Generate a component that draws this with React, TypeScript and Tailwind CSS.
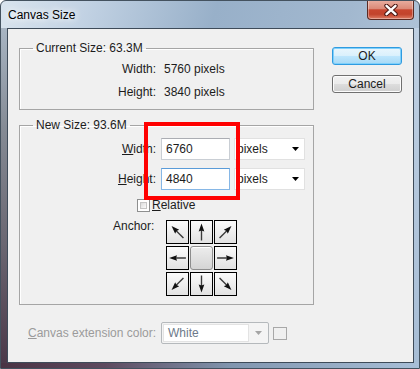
import type { ReactNode } from "react"

const Arrow = ({ deg }: { deg: number }) => (
    <svg width="21" height="22" viewBox="0 0 20 20">
        <g transform={`rotate(${deg} 10 10)`}>
            <line x1="10" y1="18" x2="10" y2="7.5" stroke="#3a3a3a" strokeWidth="1.3" />
            <path d="M10 2 L12.7 9.6 L10 8.6 L7.3 9.6 Z" fill="#111" />
        </g>
    </svg>
)

const Cell = ({ deg }: { deg: number }) => (
    <div className="flex items-center justify-center border border-black bg-[linear-gradient(#fbfbfb,#e2e2e2)]">
        <Arrow deg={deg} />
    </div>
)

const Row = ({ label, children }: { label: ReactNode; children: ReactNode }) => (
    <div className="flex items-center h-[15px]">
        <span className="w-[123px] text-right">{label}</span>
        <span className="ml-[8px]">{children}</span>
    </div>
)

const Pixels = () => (
    <div className="ml-[4px] w-[71px] h-[22px] bg-white border border-[#e1e1e1] flex items-center justify-between pl-[2px] pr-[5px]">
        <span>pixels</span>
        <svg width="7" height="4" viewBox="0 0 7 4"><path d="M0 0 H7 L3.5 4 Z" fill="#000" /></svg>
    </div>
)

export default function App() {
    return <div className="relative w-[420px] h-[369px] flex flex-col overflow-hidden rounded-t-[6px] border border-[#44525f] bg-[linear-gradient(105deg,#d9e4ee_0%,#c3d3e4_16%,#98b0c9_42%,#a2b8cf_68%,#bccee0_100%)] [font-family:'Liberation_Sans',Arial,sans-serif] text-[12px] leading-[15px] text-[#1c1c1c]">
        {/* title bar */}
        <div className="h-[27px] flex items-start justify-between">
            <span className="pl-[7px] pt-[7px] text-black [text-shadow:0_0_6px_#fff,0_0_10px_#fff]">Canvas Size</span>
            <div className="-mt-px mr-[5px] w-[47px] h-[20px] flex items-center justify-center rounded-b-[4px] border border-t-0 border-[#5b2a22] bg-[linear-gradient(#eab0a2_0%,#dc8a78_45%,#c8462f_52%,#c2432c_75%,#de7c64_100%)] shadow-[inset_0_0_0_1px_rgba(255,255,255,0.35)]">
                <svg width="14" height="12" viewBox="0 0 14 12">
                    <path d="M2.5 1.8 L11.5 10.2 M11.5 1.8 L2.5 10.2" stroke="#4a1712" strokeWidth="4.4" strokeLinecap="round" />
                    <path d="M2.5 1.8 L11.5 10.2 M11.5 1.8 L2.5 10.2" stroke="#fff" strokeWidth="2.4" strokeLinecap="round" />
                </svg>
            </div>
        </div>

        <div className="flex flex-1">
            <div className="w-[6px] bg-[linear-gradient(180deg,#a8b5c3_0%,#858b95_30%,#6a6671_65%,#4b3849_100%)]" />

            {/* client area */}
            <div className="flex-1 flex border border-[#3e4b59] bg-[#f0f0f0]">
                <div className="w-[306px] shrink-0 pl-[11px] pt-[12px] flex flex-col">
                    <fieldset className="w-[295px] border border-[#a5a5a5] pl-[13px] pr-[8px] pt-[6px] pb-[9px] shadow-[inset_1px_1px_0_#fff]">
                        <legend className="px-[3px]">Current Size: 63.3M</legend>
                        <div className="flex flex-col gap-[8px]">
                            <Row label="Width:">5760 pixels</Row>
                            <Row label="Height:">3840 pixels</Row>
                        </div>
                    </fieldset>

                    <fieldset className="mt-[8px] w-[295px] border border-[#a5a5a5] pl-[13px] pr-[8px] pt-[5px] pb-[8px] shadow-[inset_1px_1px_0_#fff]">
                        <legend className="px-[3px]">New Size: 93.6M</legend>
                        <div className="flex items-center h-[22px]">
                            <span className="w-[123px] text-right"><u>W</u>idth:</span>
                            <div className="ml-[5px] w-[69px] h-[22px] bg-white border border-[#c9ced4] border-t-[#abadb3] pl-[4px] flex items-center">6760</div>
                            <Pixels />
                        </div>
                        <div className="mt-[8px] flex items-center h-[22px]">
                            <span className="w-[123px] text-right"><u>H</u>eight:</span>
                            <div className="ml-[5px] w-[69px] h-[22px] bg-white border border-[#86b7e6] border-t-[#5a9bd8] pl-[4px] flex items-center">4840</div>
                            <Pixels />
                        </div>
                        <div className="mt-[8px] h-[15px] flex items-center pl-[104px]">
                            <div className="w-[13px] h-[13px] border border-[#8e8f8f] bg-white p-[2px]">
                                <div className="w-full h-full border border-[#c5c5c5] bg-[linear-gradient(135deg,#dcdcdc,#fbfbfb)]" />
                            </div>
                            <span className="ml-[2px]"><u>R</u>elative</span>
                        </div>
                        <div className="mt-[7px] flex items-start pl-[80px]">
                            <span className="w-[53px] -mt-[1px]">Anchor:</span>
                            <div className="grid grid-cols-[23px_23px_23px] grid-rows-[24px_24px_24px] gap-x-px gap-y-[2px]">
                                <Cell deg={315} />
                                <Cell deg={0} />
                                <Cell deg={45} />
                                <Cell deg={270} />
                                <div className="rounded-[3px] border border-[#8d8d8d] bg-[linear-gradient(#ededed,#d4d4d4)] shadow-[inset_0_1px_0_#fff]" />
                                <Cell deg={90} />
                                <Cell deg={225} />
                                <Cell deg={180} />
                                <Cell deg={135} />
                            </div>
                        </div>
                    </fieldset>

                    <div className="mt-[17px] ml-[9px] h-[22px] flex items-center">
                        <span className="w-[133px] text-[#9b9b9b]"><u>C</u>anvas extension color:</span>
                        <div className="w-[108px] h-[22px] rounded-[2px] border border-[#b5b9bc] bg-[#f4f4f4] flex items-center p-px">
                            <div className="w-[86px] h-full bg-white border border-[#e3e3e3] pl-[4px] flex items-center text-[#6d7a8a]">White</div>
                            <div className="flex-1 flex justify-center">
                                <svg width="7" height="4" viewBox="0 0 7 4"><path d="M0 0 H7 L3.5 4 Z" fill="#a5a5a5" /></svg>
                            </div>
                        </div>
                        <div className="ml-[4px] w-[14px] h-[13px] border border-[#a8a8a8] bg-[#f0f0f0]" />
                    </div>
                </div>

                <div className="pl-[18px] pt-[18px] flex flex-col gap-[10px]">
                    <button className="w-[70px] h-[18px] rounded-[3px] border border-[#2f9be0] bg-[linear-gradient(#eaf6fd_0%,#d9f0fc_50%,#bee6fd_51%,#a7d9f5_100%)] shadow-[inset_0_0_0_1px_#7fd0fb] flex items-center justify-center leading-[15px]">OK</button>
                    <button className="w-[70px] h-[18px] rounded-[3px] border border-[#707070] bg-[linear-gradient(#f2f2f2_0%,#ebebeb_50%,#dddddd_51%,#cfcfcf_100%)] shadow-[inset_0_0_0_1px_#fcfcfc] flex items-center justify-center leading-[15px]">Cancel</button>
                </div>
            </div>

            <div className="w-[5px] bg-[linear-gradient(180deg,#bfd0e2,#a7bdd5)]" />
        </div>
        <div className="h-[5px] bg-[linear-gradient(90deg,#4a3344_0%,#5d4a5f_25%,#8196af_55%,#a8bfd8_100%)]" />

        {/* red annotation box */}
        <div className="absolute left-[143px] top-[121px] w-[96px] h-[78px] border-4 border-[#ff0000]" />
    </div>
}
